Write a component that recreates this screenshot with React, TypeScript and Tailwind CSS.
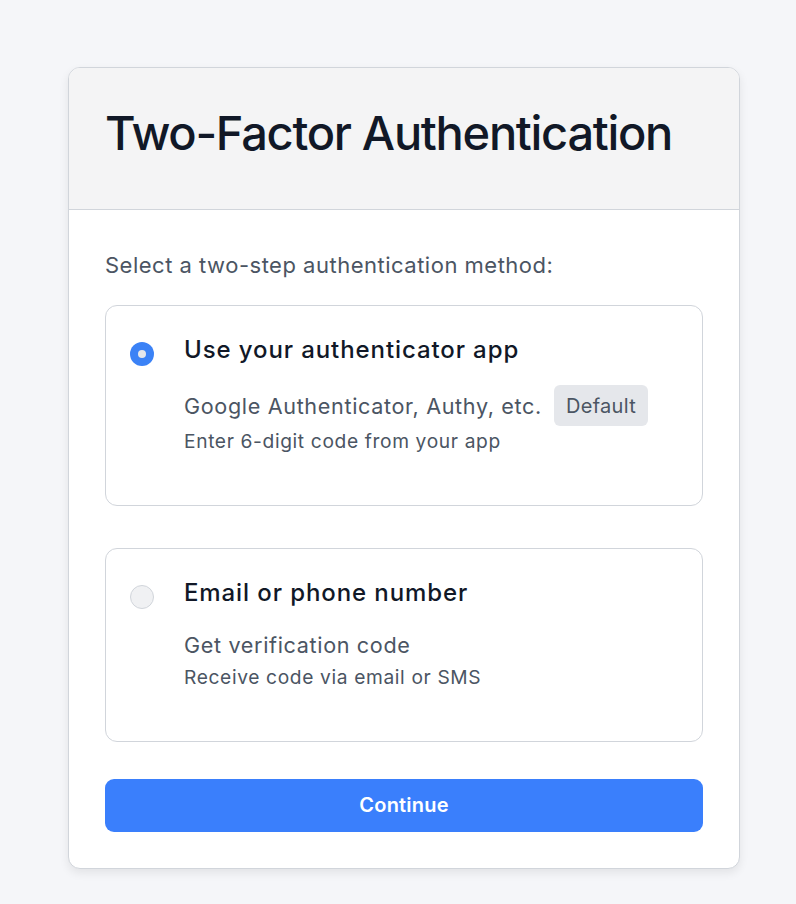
import React from "react";

const font = { fontFamily: "Inter, 'Noto Sans', sans-serif" };

function Radio({ checked }: { checked: boolean }) {
  return checked ? (
    <div className="mt-[8px] h-[24px] w-[24px] shrink-0 rounded-full bg-[#3b82f6] flex items-center justify-center">
      <div className="h-[8px] w-[8px] rounded-full bg-[#e5e7eb]" />
    </div>
  ) : (
    <div className="mt-[8px] h-[24px] w-[24px] shrink-0 rounded-full border border-[#d1d5db] bg-[#f0f1f3]" />
  );
}

function Option({
  checked,
  title,
  desc,
  sub,
  badge,
}: {
  checked: boolean;
  title: string;
  desc: string;
  sub: string;
  badge?: string;
}) {
  return (
    <div className="rounded-[12px] border border-[#d1d5db] bg-white pl-[24px] pr-[24px] pt-[28px] pb-[49px]">
      <div className="flex gap-[30px]">
        <Radio checked={checked} />
        <div className="flex flex-col">
          <div className="text-[24px] leading-[32px] font-medium tracking-[0.9px] text-[#111827]">{title}</div>
          <div className="mt-[19px] flex items-center gap-[12px]">
            <span className="text-[21.6px] leading-[34px] tracking-[0.65px] text-[#4b5563]">{desc}</span>
            {badge && (
              <span className="rounded-[6px] bg-[#e5e7eb] px-[12px] h-[41px] flex items-center text-[20px] tracking-[0.3px] text-[#4b5563]">
                {badge}
              </span>
            )}
          </div>
          <div className="mt-[1px] text-[19.2px] leading-[28.8px] tracking-[0.63px] text-[#4b5563]">{sub}</div>
        </div>
      </div>
    </div>
  );
}

export default function App() {
  return (
    <div className="min-h-[904px] bg-[#f5f6f9] pt-[67px] pl-[68px]" style={font}>
      <div className="w-[672px] overflow-hidden rounded-[12px] border border-[#d1d5db] bg-white shadow-[0_4px_10px_rgba(0,0,0,0.08)]">
        <div className="border-b border-[#d1d5db] bg-[#f4f4f5] px-[36px] pt-[36px] pb-[47px]">
          <h1 className="whitespace-nowrap text-[47px] leading-[57.6px] font-medium tracking-[-1.3px] text-[#111827]">
            Two-Factor Authentication
          </h1>
        </div>
        <div className="px-[36px] pt-[39px] pb-[36px]">
          <p className="text-[22px] leading-[32.4px] tracking-[0.5px] text-[#4b5563]">
            Select a two-step authentication method:
          </p>
          <div className="mt-[24px] flex flex-col gap-[42px]">
            <Option
              checked
              title="Use your authenticator app"
              desc="Google Authenticator, Authy, etc."
              sub="Enter 6-digit code from your app"
              badge="Default"
            />
            <Option
              checked={false}
              title="Email or phone number"
              desc="Get verification code"
              sub="Receive code via email or SMS"
            />
          </div>
          <button className="mt-[37px] flex h-[53px] w-full items-center justify-center rounded-[9px] bg-[#3a7ffc] text-[20px] font-semibold tracking-[0.2px] text-white">
            Continue
          </button>
        </div>
      </div>
    </div>
  );
}
